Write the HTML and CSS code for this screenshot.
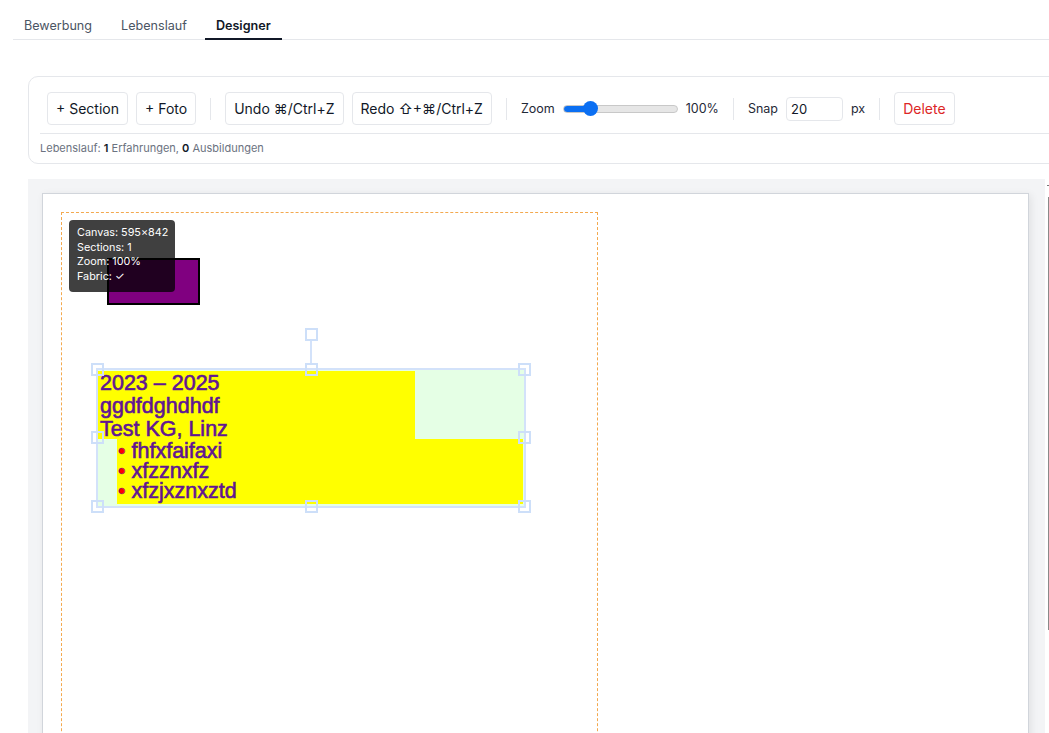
FILE: index.html
```html
<!DOCTYPE html>
<html lang="de">
<head>
<meta charset="utf-8">
<title>Designer</title>
<link rel="stylesheet" href="styles.css">
</head>
<body>
<nav class="tabs">
  <div class="tab">Bewerbung</div>
  <div class="tab">Lebenslauf</div>
  <div class="tab active">Designer</div>
</nav>

<section class="card">
  <div class="toolbar">
    <button class="btn">+ Section</button>
    <button class="btn">+ Foto</button>
    <span class="sep"></span>
    <button class="btn">Undo ⌘/Ctrl+Z</button>
    <button class="btn">Redo ⇧+⌘/Ctrl+Z</button>
    <span class="sep"></span>
    <span class="label">Zoom</span>
    <input class="range" type="range" min="50" max="300" value="100">
    <span class="label">100%</span>
    <span class="sep"></span>
    <span class="label">Snap</span>
    <input class="snap" type="text" value="20">
    <span class="label">px</span>
    <span class="sep"></span>
    <button class="btn danger">Delete</button>
  </div>
  <div class="stats">Lebenslauf: <b>1</b> Erfahrungen, <b>0</b> Ausbildungen</div>
</section>

<div class="workspace">
  <div class="canvas-area">
    <div class="page">
      <div class="margin-guide"></div>
      <div class="photo"></div>

      <div class="group">
        <div class="block-top">
          <div class="line">2023 – 2025</div>
          <div class="line">ggdfdghdhdf</div>
          <div class="line">Test KG, Linz</div>
        </div>
        <div class="block-bottom">
          <div class="item"><span class="dot">•</span> fhfxfaifaxi</div>
          <div class="item"><span class="dot">•</span> xfzznxfz</div>
          <div class="item"><span class="dot">•</span> xfzjxznxztd</div>
        </div>
      </div>

      <div class="rot-line"></div>
      <div class="handle h-rot"></div>
      <div class="handle h-tl"></div>
      <div class="handle h-tm"></div>
      <div class="handle h-tr"></div>
      <div class="handle h-ml"></div>
      <div class="handle h-mr"></div>
      <div class="handle h-bl"></div>
      <div class="handle h-bm"></div>
      <div class="handle h-br"></div>

      <div class="info">
        <div>Canvas: 595×842</div>
        <div>Sections: 1</div>
        <div>Zoom: 100%</div>
        <div>Fabric: ✓</div>
      </div>
    </div>
  </div>
  <div class="side">
    <div class="side-tick"></div>
    <div class="side-bar"></div>
  </div>
</div>
</body>
</html>
```

FILE: styles.css
```css
html, body {
  margin: 0;
  padding: 0;
  overflow: hidden;
  background: #ffffff;
}
body {
  font-family: Inter, "Noto Sans", "Liberation Sans", sans-serif;
  color: #111827;
  width: 1049px;
  height: 733px;
}

/* Tabs */
.tabs {
  display: flex;
  gap: 7px;
  margin-left: 13px;
  padding-top: 10px;
  border-bottom: 1px solid #e5e7eb;
}
.tab {
  padding: 8px 11px 4px;
  font-size: 12.6px;
  line-height: 16px;
  color: #4b5563;
  border-bottom: 2px solid transparent;
  margin-bottom: -1px;
}
.tab.active {
  color: #111827;
  font-weight: 600;
  border-bottom-color: #111827;
}

/* Toolbar card */
.card {
  margin: 36px 0 0 28px;
  width: 1060px;
  border: 1px solid #e5e7eb;
  border-radius: 10px;
  padding: 15px 12px 8px 11px;
  box-sizing: border-box;
}
.toolbar {
  display: flex;
  align-items: center;
  gap: 8px;
  padding: 0 7px 8px;
  border-bottom: 1px solid #e5e7eb;
}
.btn {
  height: 33px;
  padding: 0 8px;
  border: 1px solid #e5e7eb;
  border-radius: 4px;
  background: #ffffff;
  font-family: Inter, "Noto Sans", "DejaVu Sans", sans-serif;
  font-size: 14px;
  color: #111827;
  white-space: nowrap;
}
.btn.wide {
  padding: 0 9px;
}
.btn.danger {
  color: #dc2626;
}
.sep {
  width: 1px;
  height: 22px;
  background: #e5e7eb;
  margin: 0 6px;
}
.label {
  font-size: 12.5px;
  color: #1f2937;
  white-space: nowrap;
}
.range {
  -webkit-appearance: none;
  appearance: none;
  width: 115px;
  height: 8px;
  margin: 0;
  border: 1px solid #c8c8c8;
  border-radius: 4px;
  background: linear-gradient(to right, #0b6ff2 0 24%, #e6e6e6 24% 100%);
  box-sizing: border-box;
}
.range::-webkit-slider-thumb {
  -webkit-appearance: none;
  width: 15px;
  height: 15px;
  border-radius: 50%;
  background: #0b6ff2;
  border: none;
}
.snap {
  width: 57px;
  height: 24px;
  box-sizing: border-box;
  border: 1px solid #e5e7eb;
  border-radius: 4px;
  padding: 0 4px;
  font-family: Inter, "Noto Sans", sans-serif;
  font-size: 13px;
  color: #111827;
  outline: none;
}
.stats {
  margin-top: 7px;
  font-size: 11px;
  line-height: 14px;
  color: #6b7280;
}
.stats b {
  color: #111827;
  font-weight: 600;
}

/* Workspace */
.workspace {
  display: flex;
  margin: 15px 0 0 28px;
}
.canvas-area {
  width: 1017px;
  height: 560px;
  background: #f3f4f6;
  padding: 14px 16px 0 14px;
  box-sizing: border-box;
}
.page {
  position: relative;
  height: 700px;
  background: #ffffff;
  border: 1px solid #d1d5db;
  box-shadow: 2px 2px 8px rgba(0, 0, 0, 0.08);
  overflow: hidden;
}
.side {
  margin-left: 2px;
  width: 2px;
  position: relative;
}
.side-tick {
  margin-top: 6px;
  width: 2px;
  height: 1px;
  background: #777;
}
.side-bar {
  margin-top: 11px;
  width: 1px;
  margin-left: 1px;
  height: 433px;
  background: #8a8a8a;
}

/* Free-canvas items */
.margin-guide {
  position: absolute;
  left: 18px;
  top: 18px;
  width: 537px;
  height: 860px;
  box-sizing: border-box;
  border: 1px dashed #f3a94f;
}
.photo {
  position: absolute;
  left: 64px;
  top: 64px;
  width: 93px;
  height: 47px;
  box-sizing: border-box;
  background: #800080;
  border: 2px solid #000000;
}
.info {
  position: absolute;
  left: 26px;
  top: 26px;
  width: 106px;
  height: 72px;
  box-sizing: border-box;
  padding: 6px 8px;
  border-radius: 4px;
  background: rgba(0, 0, 0, 0.75);
  color: #ffffff;
  font-size: 10.8px;
  line-height: 14.6px;
  white-space: nowrap;
}
.group {
  position: absolute;
  left: 53px;
  top: 174px;
  width: 430px;
  height: 140px;
  box-sizing: border-box;
  border: 2px solid #d3e2fa;
  background: #e5ffe5;
  font-family: "Liberation Sans", Arial, sans-serif;
  font-size: 21.5px;
  color: #6a0f8e;
  -webkit-text-stroke: 0.6px #55209a;
}
.block-top {
  position: absolute;
  left: 0;
  top: 1px;
  width: 317px;
  height: 68px;
  background: #ffff00;
  padding: 1px 0 0 2px;
  box-sizing: border-box;
  line-height: 23px;
}
.block-bottom {
  position: absolute;
  left: 19px;
  top: 69px;
  width: 406px;
  height: 65px;
  background: #ffff00;
  padding: 2px 0 0 1px;
  box-sizing: border-box;
  line-height: 20px;
}
.line, .item {
  white-space: nowrap;
}
.dot {
  color: #ff0000;
  -webkit-text-stroke: 0.6px #7a1a8a;
}
.rot-line {
  position: absolute;
  left: 267px;
  top: 146px;
  width: 2px;
  height: 24px;
  background: #d3e2fa;
}
.handle {
  position: absolute;
  width: 13px;
  height: 13px;
  box-sizing: border-box;
  border: 2px solid #cddff9;
}
.h-rot { left: 262px; top: 134px; }
.h-tl { left: 48px; top: 169px; }
.h-tm { left: 262px; top: 169px; }
.h-tr { left: 475px; top: 169px; }
.h-ml { left: 48px; top: 237px; }
.h-mr { left: 475px; top: 237px; }
.h-bl { left: 48px; top: 306px; }
.h-bm { left: 262px; top: 306px; }
.h-br { left: 475px; top: 306px; }
```
